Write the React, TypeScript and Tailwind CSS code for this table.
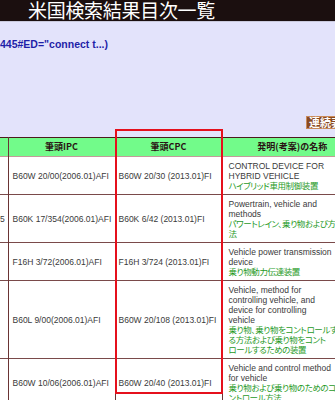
import React from 'react';

const jp = "font-['Liberation_Sans','Noto_Sans_CJK_JP',sans-serif]";

type Row = {
  lead?: string;
  ipc: string;
  cpc: string;
  en: string[];
  ja: string[];
};

const rows: Row[] = [
  {
    ipc: 'B60W 20/00(2006.01)AFI',
    cpc: 'B60W 20/30 (2013.01)FI',
    en: ['CONTROL DEVICE FOR', 'HYBRID VEHICLE'],
    ja: ['ハイブリッド車用制御装置'],
  },
  {
    lead: '5',
    ipc: 'B60K 17/354(2006.01)AFI',
    cpc: 'B60K 6/42 (2013.01)FI',
    en: ['Powertrain, vehicle and', 'methods'],
    ja: ['パワートレイン、乗り物および方', '法'],
  },
  {
    ipc: 'F16H 3/72(2006.01)AFI',
    cpc: 'F16H 3/724 (2013.01)FI',
    en: ['Vehicle power transmission', 'device'],
    ja: ['乗り物動力伝達装置'],
  },
  {
    ipc: 'B60L 9/00(2006.01)AFI',
    cpc: 'B60W 20/108 (2013.01)FI',
    en: ['Vehicle, method for', 'controlling vehicle, and', 'device for controlling', 'vehicle'],
    ja: ['乗り物、乗り物をコントロールす', 'る方法および乗り物をコント', 'ロールするための装置'],
  },
  {
    ipc: 'B60W 10/06(2006.01)AFI',
    cpc: 'B60W 20/40 (2013.01)FI',
    en: ['Vehicle and control method', 'for vehicle'],
    ja: ['乗り物および乗り物のためのコ', 'ントロール方法'],
  },
];

export default function App() {
  return (
    <div className={`w-[335px] h-[400px] overflow-hidden bg-white relative ${jp}`}>
      <div className="w-[370px]">
        {/* title bar */}
        <div className="h-[21px] bg-[#1b0f0f] pl-[28px] text-white text-[19px] leading-[20px] tracking-[-0.3px] whitespace-nowrap font-['Noto_Sans_CJK_JP',sans-serif]">
          米国検索結果目次一覧
        </div>
        <div className="h-[1px] bg-[#c9c9dc]" />

        {/* query area */}
        <div className="h-[115px] bg-[#e3e3fb] flex flex-col">
          <div className="pt-[17px] text-[10.5px] leading-[11px] font-bold text-[#1f1fa8] whitespace-nowrap">
            445#ED=&quot;connect t...)
          </div>
          <div className="flex-1" />
          <div className="flex justify-start pl-[306px] pb-[8px]">
            <div className="h-[13px] px-[2px] bg-[#8a4a22] border border-[#c98a5a] text-white font-bold text-[11px] leading-[11px] whitespace-nowrap font-['Noto_Sans_CJK_JP',sans-serif]">
              連続表示
            </div>
          </div>
        </div>

        {/* result table */}
        <table className="table-fixed border-collapse w-[362px] text-[8.5px] leading-[10px] text-[#3a3a3a]">
          <colgroup>
            <col className="w-[8px]" />
            <col className="w-[107px]" />
            <col className="w-[107px]" />
            <col className="w-[140px]" />
          </colgroup>
          <thead>
            <tr className="bg-[#72fb8a] h-[19px] border-t border-t-[#4a1c1c] border-b border-b-[#c49a9a]">
              <th className="border-r border-[#6a3434]" />
              <th className="border-r border-[#6a3434] font-bold text-[9px] text-[#2a1414] font-['Noto_Sans_CJK_JP',sans-serif]">筆頭IPC</th>
              <th className="border-r border-[#6a3434] font-bold text-[9px] text-[#2a1414] font-['Noto_Sans_CJK_JP',sans-serif]">筆頭CPC</th>
              <th className="font-bold text-[9px] text-[#2a1414] font-['Noto_Sans_CJK_JP',sans-serif]">発明(考案)の名称</th>
            </tr>
          </thead>
          <tbody>
            {rows.map((r, i) => (
              <tr key={i} className="border-b border-[#7a4a4a]">
                <td className="border-r border-[#6a3434] text-right pr-[3px] overflow-hidden whitespace-nowrap">{r.lead}</td>
                <td className="border-r border-[#6a3434] pl-[4px] whitespace-nowrap">{r.ipc}</td>
                <td className="border-r border-[#6a3434] pl-[3px] whitespace-nowrap">{r.cpc}</td>
                <td className="pl-[6px] pt-[4px] pb-[3px] whitespace-nowrap">
                  {r.en.map((l, j) => (
                    <div key={j}>{l}</div>
                  ))}
                  {r.ja.map((l, j) => (
                    <div key={j} className="text-[8.5px] tracking-[-0.4px] text-[#1f9a1f] [font-feature-settings:'palt']">{l}</div>
                  ))}
                </td>
              </tr>
            ))}
          </tbody>
        </table>
      </div>

      {/* red highlight around the CPC column */}
      <div className="absolute left-[115px] top-[129px] w-[108px] h-[265px] border-2 border-[#e5101c] pointer-events-none" />
    </div>
  );
}
